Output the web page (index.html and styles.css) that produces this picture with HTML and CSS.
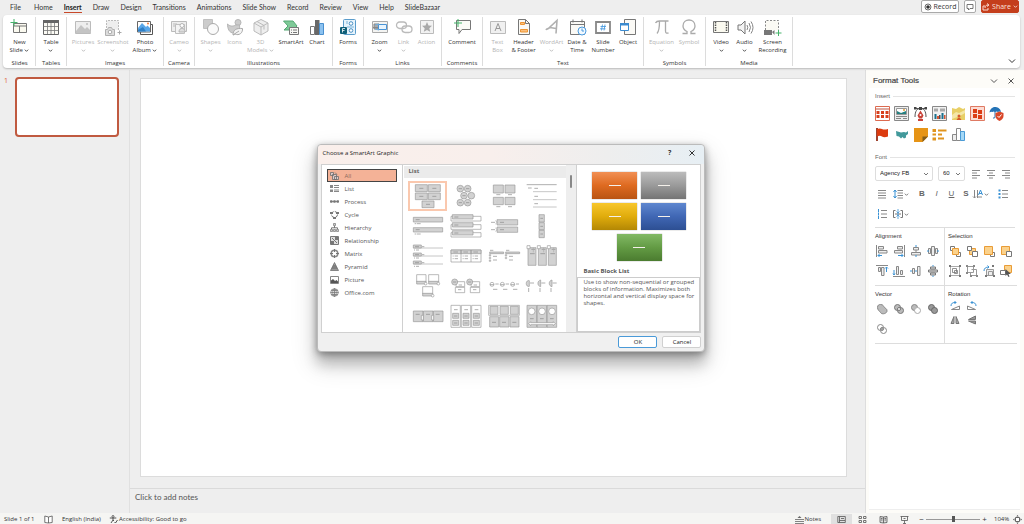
FILE: index.html
```html
<!DOCTYPE html>
<html lang="en">
<head>
<meta charset="utf-8">
<title>Presentation</title>
<link rel="stylesheet" href="styles.css">
</head>
<body>
<svg class="defs" aria-hidden="true">
  <symbol id="chev" viewBox="0 0 6 6"><path d="M1 2l2 2 2-2" fill="none" stroke="currentColor"/></symbol>
  <symbol id="bigchev" viewBox="0 0 8 8"><path d="M1 2.500l3 3 3-3" fill="none" stroke="currentColor"/></symbol>
  <symbol id="cross" viewBox="0 0 8 8"><path d="M1.500 1.500l5 5M6.500 1.500l-5 5" fill="none" stroke="currentColor"/></symbol>
</svg>

<header class="tabs">
  <nav class="tab-list">
    <a href="#">File</a><a href="#">Home</a><a href="#" class="active">Insert</a><a href="#">Draw</a><a href="#">Design</a><a href="#">Transitions</a><a href="#">Animations</a><a href="#">Slide Show</a><a href="#">Record</a><a href="#">Review</a><a href="#">View</a><a href="#">Help</a><a href="#">SlideBazaar</a>
  </nav>
  <div class="tab-actions">
    <button class="top-btn record"><svg viewBox="0 0 8 8"><circle cx="4" cy="4" r="3" fill="none" stroke="#444" stroke-width=".8"/><circle cx="4" cy="4" r="1.800" fill="#333"/></svg>Record</button>
    <button class="top-btn comment" aria-label="Comments"><svg viewBox="0 0 8 8"><path d="M1 1.500h6v4H4L2.500 7V5.500H1z" fill="none" stroke="#555" stroke-width=".8"/></svg></button>
    <button class="top-btn share"><svg viewBox="0 0 8 8"><path d="M3 3H1v4h5V5M3 5c0-2 1-3 3-3M5 .5L7 2 5 3.500" fill="none" stroke="#fbd9cf"/></svg>Share<svg class="c"><use href="#chev"/></svg></button>
  </div>
</header>

<section class="ribbon" aria-label="Insert ribbon">
  <div class="group g-slides"><div class="tools">
    <button><svg viewBox="0 0 18 18"><path d="M3.500 5.500h13v9h-13zM3.500 8h13M9.500 8v6.500" fill="#fbfaf0" stroke="#777"/><path d="M4 1v7M.5 4.500h7" stroke="#45b36b"/></svg><span>New<br>Slide <svg class="c"><use href="#chev"/></svg></span></button>
  </div><h2>Slides</h2></div>
  <div class="group g-tables"><div class="tools">
    <button><svg viewBox="0 0 18 18"><path d="M1.500 2.500h15v14h-15z" fill="#fbfaf4" stroke="#666"/><path d="M1 2h16v3H1z" fill="#666"/><path d="M1.500 8.500h15M1.500 12.500h15M5.500 5v11M9 5v11M12.500 5v11" stroke="#777" stroke-width=".8"/></svg><span>Table<br><svg class="c"><use href="#chev"/></svg></span></button>
  </div><h2>Tables</h2></div>
  <div class="group g-images"><div class="tools">
    <button disabled><svg viewBox="0 0 18 18"><path d="M1.500 3.500h15v12h-15z" fill="#eee" stroke="#bbb"/><path d="M2 13l5-6 4 4 2-2 4 4v2H2z" fill="#c4c4c4"/><circle cx="13" cy="6" r="1" fill="#bbb"/></svg><span>Pictures<br><svg class="c"><use href="#chev"/></svg></span></button>
    <button disabled><svg viewBox="0 0 18 18"><path d="M2.500 10V2.500h12V12" fill="#eee" stroke="#bbb" stroke-dasharray="2 1"/><path d="M1.500 11.500h2l1-2h3l1 2h2v6h-9z" fill="#ddd" stroke="#b0b0b0"/><circle cx="6" cy="14" r="1.800" fill="#fff" stroke="#aaa"/><path d="M15.500 12.500v4M13.500 14.500h4" stroke="#aaa"/></svg><span>Screenshot<br><svg class="c"><use href="#chev"/></svg></span></button>
    <button><svg viewBox="0 0 18 18"><path d="M4.500 14v2.500h12v-10H14" fill="none" stroke="#555"/><path d="M1.500 3.500h13v10.500h-13z" fill="#fff" stroke="#666"/><path d="M2 10l4-5 4 4 1.500-1.500L14 10v3.500H2z" fill="#58a6e8"/><path d="M2 12l5-3 3 4.500H2z" fill="#2f7fc6"/><circle cx="12" cy="5.500" r="1" fill="#ef7a3a"/></svg><span>Photo<br>Album <svg class="c"><use href="#chev"/></svg></span></button>
  </div><h2>Images</h2></div>
  <div class="group g-camera"><div class="tools">
    <button disabled><svg viewBox="0 0 18 18"><path d="M1.500 3.500h15v10h-15z" fill="#eee" stroke="#bbb"/><path d="M5.500 6.500h9v9h-9z" fill="#f4f4f4" stroke="#c0c0c0"/><circle cx="12" cy="7.500" r="2" fill="#fff" stroke="#b5b5b5"/><path d="M9 14c0-5 6-5 6 0z" fill="#ddd" stroke="#b5b5b5"/><path d="M3 6h4M3 8h3" stroke="#bbb"/></svg><span>Cameo<br><svg class="c"><use href="#chev"/></svg></span></button>
  </div><h2>Camera</h2></div>
  <div class="group g-illus"><div class="tools">
    <button disabled><svg viewBox="0 0 18 18"><path d="M1.500 1.500h9v9h-9z" fill="#ccc" stroke="#c0c0c0"/><circle cx="11" cy="11" r="5.500" fill="#fafafa" stroke="#aaa"/></svg><span>Shapes<br><svg class="c"><use href="#chev"/></svg></span></button>
    <button disabled><svg viewBox="0 0 18 18"><circle cx="12" cy="4.500" r="3" fill="#ccc" stroke="#b5b5b5"/><path d="M1.500 6c2 2 5 3 8 1h4c1 6-3 8-6 8-4 0-6-4-6-9z" fill="#ccc" stroke="#b5b5b5"/><path d="M7 17c0-5 3-7 9.500-6.500C17 15 13 18 9 16zM7 17l6-4" fill="#f3f3f3" stroke="#aaa"/></svg><span>Icons</span></button>
    <button disabled><svg viewBox="0 0 18 18"><path d="M9 1.500l7 3.500v8L9 17l-7-4V5z" fill="#eee" stroke="#bbb"/><path d="M2 5l7 4 7-4M9 9v8M5 3.500l7 4v4" fill="none" stroke="#bbb"/></svg><span>3D<br>Models <svg class="c"><use href="#chev"/></svg></span></button>
    <button><svg viewBox="0 0 18 18"><path d="M1.500 3h9.500l4 5-4 4H2l4-4z" fill="#7fca98" stroke="#55a873"/><path d="M7.500 9.500h9v7h-9z" fill="#f7f7f4" stroke="#777"/><path d="M9 12h1M11 12h4M9 14.500h1M11 14.500h4" stroke="#777"/></svg><span>SmartArt</span></button>
    <button><svg viewBox="0 0 18 18"><path d="M2.500 8.500h4v8h-4z" fill="#fff" stroke="#777"/><path d="M7 2h4.500v15H7z" fill="#686868"/><path d="M11.500 5.500h4v11h-4z" fill="#8cc2f0" stroke="#4a90cf"/></svg><span>Chart</span></button>
  </div><h2>Illustrations</h2></div>
  <div class="group g-forms"><div class="tools">
    <button><svg viewBox="0 0 18 18"><rect x="4.500" y="1.500" width="12" height="15" rx="1" fill="#e6f3fb" stroke="#5a9ccb"/><circle cx="12" cy="5.500" r="1.800" fill="#fff" stroke="#4a90c4"/><circle cx="12" cy="12.500" r="1.800" fill="#fff" stroke="#4a90c4"/><path d="M8 3v3M8 9h7" stroke="#7ab4dc"/><rect x="1" y="9" width="7" height="7" rx="1" fill="#0f5f78"/><path d="M3.500 14.500v-4h2.500M3.500 12.500h2" stroke="#fff" fill="none" stroke-width=".8"/></svg><span>Forms</span></button>
  </div><h2>Forms</h2></div>
  <div class="group g-links"><div class="tools">
    <button><svg viewBox="0 0 18 18"><path d="M1.500 3.500h15v11h-15z" fill="#f4f4f2" stroke="#aaa"/><path d="M3 6h5v5H3zM2 9.500h6" fill="#aaa" stroke="#888"/><path d="M7.500 6.500h8v5h-8z" fill="#e8f4fd" stroke="#4a94d6"/><path d="M4 7l4-1M4 11l4 1" stroke="#6faee0"/></svg><span>Zoom<br><svg class="c"><use href="#chev"/></svg></span></button>
    <button disabled><svg viewBox="0 0 18 18"><g fill="none" stroke="#bbb" stroke-width="1.300"><rect x="1.500" y="4" width="10" height="6.500" rx="3.200"/><rect x="7" y="8" width="10" height="6.500" rx="3.200"/></g></svg><span>Link<br><svg class="c"><use href="#chev"/></svg></span></button>
    <button disabled><svg viewBox="0 0 18 18"><path d="M2.500 2.500h13v13h-13z" fill="#f2f2f2" stroke="#bbb"/><path d="M9 4l1.500 3.500 3.500.3-2.700 2.400.9 3.600L9 12l-3.200 1.800.9-3.600L4 7.800l3.500-.3z" fill="#a8a8a8"/></svg><span>Action</span></button>
  </div><h2>Links</h2></div>
  <div class="group g-comments"><div class="tools">
    <button><svg viewBox="0 0 18 18"><path d="M3.500 2.500h14v9H9l-3 4v-4H3.500z" fill="#fbfaf6" stroke="#777"/><path d="M5 1v8M1 5h8" stroke="#45b36b"/></svg><span>Comment</span></button>
  </div><h2>Comments</h2></div>
  <div class="group g-text"><div class="tools">
    <button disabled><svg viewBox="0 0 18 18"><path d="M1.500 3.500h15v12h-15z" fill="#f0f0f0" stroke="#bbb"/><path d="M6 13l3-7.500L12 13M7 10.500h4" fill="none" stroke="#999"/></svg><span>Text<br>Box</span></button>
    <button><svg viewBox="0 0 18 18"><path d="M3.500 1.500h7l4 4v11h-11z" fill="#fbfaf6" stroke="#777"/><path d="M10.500 1.500v4h4" fill="none" stroke="#777"/><path d="M5.500 4.500h4v2h-4zM5.500 11.500h7v2.500h-7z" fill="#fbbf7d" stroke="#ee9533"/></svg><span>Header<br>&amp; Footer</span></button>
    <button disabled><svg viewBox="0 0 18 18"><path d="M3 12c1-2 2 0 4-3l7-6.500-1 13M7 9.500l6 1" fill="none" stroke="#b0b0b0" stroke-width="1.600"/></svg><span>WordArt<br><svg class="c"><use href="#chev"/></svg></span></button>
    <button><svg viewBox="0 0 18 18"><path d="M2.500 3.500h14v13h-14zM2.500 6.500h14M5 1.500v3M14 1.500v3" fill="#fbfaf6" stroke="#777"/><circle cx="14" cy="13" r="4" fill="#f2f9ff" stroke="#4a9ade"/><path d="M14 10.500V13h2" fill="none" stroke="#4a9ade"/></svg><span>Date &amp;<br>Time</span></button>
    <button><svg viewBox="0 0 18 18"><path d="M2 4h14v11H2z" fill="#fff" stroke="#888" stroke-width="1.800"/><path d="M8.500 6.500l-1 6M11 6.500l-1 6M6.500 8.500h5.500M6 10.800h5.500" stroke="#3f94dc" stroke-width=".8" fill="none"/></svg><span>Slide<br>Number</span></button>
    <button><svg viewBox="0 0 18 18"><path d="M5.500 1.500h11v15h-11z" fill="#fbfaf6" stroke="#777"/><path d="M1.500 5.500h8v7h-8z" fill="#fff" stroke="#3b8bd0"/><path d="M1 5h9v2.500H1z" fill="#3b8bd0"/></svg><span>Object</span></button>
  </div><h2>Text</h2></div>
  <div class="group g-symbols"><div class="tools">
    <button disabled><svg viewBox="0 0 18 18"><path d="M2.500 5c1-2 2-2 4-2h9M6.500 3c0 6 0 10-2.500 12.500M12.500 3v10c0 2 1 2.500 3 2" fill="none" stroke="#aaa" stroke-width="1.300"/></svg><span>Equation<br><svg class="c"><use href="#chev"/></svg></span></button>
    <button disabled><svg viewBox="0 0 18 18"><path d="M2.500 15.500h4.500v-2C4 12 3 10 3 8c0-4 3-6 6-6s6 2 6 6c0 2-1 4-4 5.500v2h4.500" fill="none" stroke="#aaa" stroke-width="1.300"/></svg><span>Symbol</span></button>
  </div><h2>Symbols</h2></div>
  <div class="group g-media"><div class="tools">
    <button><svg viewBox="0 0 18 18"><path d="M1.500 3.500h15v11h-15z" fill="#fbfaf0" stroke="#777"/><path d="M3.500 4v10M14.500 4v10" stroke="#555" stroke-width="1.500" stroke-dasharray="1.500 1"/></svg><span>Video<br><svg class="c"><use href="#chev"/></svg></span></button>
    <button><svg viewBox="0 0 18 18"><path d="M2 7h3l4-4v13l-4-4H2z" fill="#f4f4f4" stroke="#777"/><path d="M11 7q1.500 2.500 0 5M13 5q3 4.500 0 9M15 3.500q4 6 0 12" fill="none" stroke="#777" stroke-width=".9"/></svg><span>Audio<br><svg class="c"><use href="#chev"/></svg></span></button>
    <button><svg viewBox="0 0 18 18"><path d="M1.500 12V2.500h13V12" fill="#fbfaf4" stroke="#888" stroke-dasharray="2 1.500"/><path d="M0 12h8v5H0zM8 14l2.500-2v5z" fill="#777"/><path d="M14.500 12v6M11.500 15h6" stroke="#45b36b"/></svg><span>Screen<br>Recording</span></button>
  </div><h2>Media</h2></div>
  <button class="collapse" aria-label="Collapse ribbon"><svg><use href="#bigchev"/></svg></button>
</section>

<main class="workspace">
  <aside class="thumbs"><span class="num">1</span><button class="thumb" aria-label="Slide 1"></button></aside>
  <section class="editor">
    <div class="canvas"><div class="slide"></div></div>
    <div class="notes">Click to add notes</div>
  </section>
  <aside class="pane">
    <div class="pane-head"><h1>Format Tools</h1><button aria-label="Pane options"><svg><use href="#bigchev"/></svg></button><button aria-label="Close pane"><svg><use href="#cross"/></svg></button></div>
    <div class="pane-body">
      <h3 class="ruled">Insert</h3>
      <div class="insert-grid">
        <button aria-label="Table"><svg viewBox="0 0 15 15"><path d="M.5.500h14v14H.5z" fill="#fff" stroke="#dc6a50"/><path d="M1 2h13v2H1z" fill="#dfaaa0"/><path d="M1.500 5h3v3h-3zM6 5h3v3H6zM10.500 5h3v3h-3zM1.500 9h3v3h-3zM6 9h3v3H6zM10.500 9h3v3h-3z" fill="#d8401d"/></svg></button>
        <button aria-label="Picture layout"><svg viewBox="0 0 15 15"><path d="M.5.500h14v14H.5z" fill="#eee" stroke="#888"/><path d="M2.500 2.500h10v6h-10z" fill="#fff" stroke="#999"/><path d="M3 8V5l4 2 5-2v3z" fill="#268080"/><circle cx="10" cy="4" r="1" fill="#e59a31"/><path d="M2 10.500h11M2 12.500h5M9 12.500h4" stroke="#888"/></svg></button>
        <button aria-label="Vector pen"><svg viewBox="0 0 15 15"><path d="M2 11C2 5 4 2.500 7.500 2.500S13 5 13 11M2 2.500h11" fill="none" stroke="#555"/><path d="M1 1h2.500v2.500H1zM6 1h3v3H6zM11.500 1H14v2.500h-2.500z" fill="#444"/><path d="M7.500 4.500l3 5-1.500 3H6l-1.500-3zM5 13h5v2H5z" fill="#c84339"/><circle cx="7.500" cy="9" r="1" fill="#fff"/></svg></button>
        <button aria-label="Chart layout"><svg viewBox="0 0 15 15"><path d="M.5.500h14v14H.5z" fill="#f1f1f1" stroke="#888"/><path d="M2 2.500h4v3H2zM8 2.500h5v3H8z" fill="#aaa"/><path d="M2.500 8h2v5h-2zM9.500 7h2v6h-2z" fill="#1b718d"/><path d="M5 10h2v3H5zM12 9h1.500v4H12z" fill="#d65532"/><path d="M7 9h1.500v4H7z" fill="#48505c"/></svg></button>
        <button aria-label="Map region"><svg viewBox="0 0 15 15"><path d="M1 2l4 1 3-2 4 2 2-1v12H1z" fill="#e8cf66"/><path d="M1 9l4-3 3 1 6-3v3l-5 3-8 3z" fill="#f4e7a8"/><circle cx="8" cy="10" r="1.500" fill="#d65a2c"/><path d="M5.500 14q2.500-5 5 0z" fill="#d65a2c"/></svg></button>
        <button aria-label="Grid"><svg viewBox="0 0 15 15"><path d="M.5.500h14v14H.5z" fill="#fbdcd4" stroke="#df7a63"/><path d="M3 3h4v4H3zM8 4h4v4H8zM3 8h4v4H3zM8 9h4v4H8z" fill="#dc3c14"/></svg></button>
        <button aria-label="Umbrella"><svg viewBox="0 0 15 15"><path d="M.5 6.500C1 2.500 4 1 6 1s5.500 1 6 5q-2-1-3 0-1.500-1-3 0-1.500-1-2.500 0-1.500-.5-3 .5z" fill="#2473b6"/><path d="M6 5v6q0 1.500-2 1" fill="none" stroke="#2473b6"/><path d="M10.500 5.500l4 1.500v3q0 3-4 5-4-2-4-5V7z" fill="#d9482a"/><path d="M8.500 10l1.500 1.500 2.500-3" stroke="#fff" fill="none"/></svg></button>
        <button aria-label="Flag"><svg viewBox="0 0 15 15"><path d="M1 1h2v13H1z" fill="#9f4330"/><path d="M2 2q3-1 5 0t6 0v7.500q-4 1.500-6 0t-5 0z" fill="#dc3c10"/></svg></button>
        <button aria-label="Country map"><svg viewBox="0 0 15 15"><path d="M2 4l5 1.500L10 5l2 .5L14 4v3l-2 1.500v2L11 11l-1 .5L8.500 10 7 11.500 5 9.500 2.500 9z" fill="#42999b"/></svg></button>
        <button aria-label="Sticky note"><svg viewBox="0 0 15 15"><path d="M1 1h14v8.500L9.500 15H1z" fill="#e69416"/><path d="M9.500 15V9.500H15z" fill="#825c1a"/></svg></button>
        <button aria-label="Agenda"><svg viewBox="0 0 15 15"><path d="M6 3.500h8.500M6 7.500h4M6 11.500h6" stroke="#e0941e" stroke-width="1.800"/><path d="M.5 2h3.500v3H.5zM.5 6.500h3.500v2H.5zM.5 10.500h3.500v3H.5z" fill="#e0941e"/></svg></button>
        <button aria-label="Chart"><svg viewBox="0 0 15 15"><path d="M1.500 7.500h4v6h-4z" fill="#eee" stroke="#888"/><path d="M5.500 1.500h4v12h-4z" fill="#fff" stroke="#888"/><path d="M9.500 4.500h4v9h-4z" fill="#a5d8f6" stroke="#4a9bd6"/></svg></button>
      </div>
      <h3 class="ruled">Font</h3>
      <div class="font-row">
        <label class="pick face"><select aria-label="Font family"><option>Agency FB</option></select><svg><use href="#chev"/></svg></label>
        <label class="pick size"><select aria-label="Font size"><option>60</option></select><svg><use href="#chev"/></svg></label>
        <button class="first" aria-label="Align left"><svg viewBox="0 0 10 10"><path d="M1 1.500h8M1 4h5M1 6.500h8M1 9h5" stroke="#888"/></svg></button>
        <button aria-label="Align center"><svg viewBox="0 0 10 10"><path d="M1 1.500h8M3 4h4M1 6.500h8M3 9h4" stroke="#888"/></svg></button>
        <button aria-label="Align right"><svg viewBox="0 0 10 10"><path d="M1 1.500h8M4 4h5M1 6.500h8M4 9h5" stroke="#888"/></svg></button>
      </div>
      <div class="style-row">
        <button aria-label="Justify"><svg viewBox="0 0 10 10"><path d="M1 1.500h8M1 4h8M1 6.500h8M1 9h8" stroke="#888"/></svg></button>
        <button class="drop" aria-label="Line spacing"><svg viewBox="0 0 10 10"><path d="M4.500 1.500H10M4.500 4H10M4.500 6.500H10M4.500 9H10" stroke="#888"/><path d="M2 1v8M.5 3L2 1l1.500 2M.5 7L2 9l1.500-2" stroke="#3a92d4" fill="none"/></svg><svg class="c"><use href="#chev"/></svg></button>
        <button class="b">B</button><button class="i">I</button><button class="u">U</button><button class="s">S</button>
        <button class="drop" aria-label="Text direction"><svg viewBox="0 0 10 10"><path d="M1.500 1v8M4.500 1v8M0 7.500L1.500 9 3 7.500" stroke="#888" fill="none"/><path d="M5.500 6L7.500 1l2 5M6 4.500h3" stroke="#3a92d4" fill="none"/><path d="M5 8h4" stroke="#888"/></svg><svg class="c"><use href="#chev"/></svg></button>
        <button aria-label="Bullets"><svg viewBox="0 0 10 10"><path d="M4 1.500h6M4 5h6M4 8.500h6" stroke="#888"/><path d="M.5.500h2v2h-2zM.5 4h2v2h-2zM.5 7.500h2v2h-2z" fill="#3a92d4"/></svg></button>
        <button aria-label="Numbering"><svg viewBox="0 0 10 10"><path d="M4 1.500h6M4 5h6M4 8.500h6" stroke="#888"/><path d="M1.500 0v3M1.500 3.500v3M1.500 7v3" stroke="#3a92d4"/></svg></button>
        <button class="drop" aria-label="Vertical align"><svg viewBox="0 0 10 10"><path d="M2.500 1.500h-2v7h2M7.500 1.500h2v7h-2M2 5h6" stroke="#777" fill="none"/><path d="M5 0v10M3.500 2.500L5 4l1.500-1.500M3.500 7.500L5 6l1.500 1.500" stroke="#3a92d4" stroke-width=".8" fill="none"/></svg><svg class="c"><use href="#chev"/></svg></button>
      </div>
      <div class="quads">
        <section><h4>Alignment</h4><div class="icons">
          <button aria-label="Align left edges"><svg viewBox="0 0 12 12"><path d="M.5 0v12M2.500 1.500h5v2.500h-5zM2.500 5.500H11v2.500H2.500z" fill="#eee" stroke="#888"/><path d="M6 10.500H2M3.500 9L2 10.500 3.500 12" stroke="#3a92d4" fill="none"/></svg></button>
          <button aria-label="Align right edges"><svg viewBox="0 0 12 12"><path d="M11.500 0v12M4.500 1.500h5v2.500h-5zM1.500 5.500h8v2.500h-8z" fill="#eee" stroke="#888"/><path d="M5 10.500h5M8.500 9l1.500 1.500L8.500 12" stroke="#3a92d4" fill="none"/></svg></button>
          <button aria-label="Align centres"><svg viewBox="0 0 12 12"><path d="M3.500 2.500h5v2.500h-5zM1.500 7.500h9v2.500h-9zM6 5v2" fill="#eee" stroke="#888"/><path d="M6 0v2M6 10v2" stroke="#3a92d4"/></svg></button>
          <button aria-label="Distribute across"><svg viewBox="0 0 12 12"><path d="M4.500 1.500h3v9h-3zM1.500 3.500h2v5h-2zM8.500 3.500h2v5h-2z" fill="#eee" stroke="#888"/><path d="M0 6h2M10 6h2" stroke="#3a92d4"/></svg></button>
          <button aria-label="Align top edges"><svg viewBox="0 0 12 12"><path d="M0 .5h12M2.500 2.500h2v4h-2zM5.500 2.500h2.500v8H5.500z" fill="#eee" stroke="#888"/><path d="M10.500 7V2M9 3.500L10.500 2 12 3.500" stroke="#3a92d4" fill="none"/></svg></button>
          <button aria-label="Align bottom edges"><svg viewBox="0 0 12 12"><path d="M0 11.500h12M3.500 1.500h2v8h-2zM7.500 5.500h2v4h-2z" fill="#eee" stroke="#888"/><path d="M1 5v5M0 8.500L1 10l1-1.500" stroke="#3a92d4" fill="none"/></svg></button>
          <button aria-label="Align middle"><svg viewBox="0 0 12 12"><path d="M2.500 3.500h2v5h-2zM7.500 1.500h2.500v9H7.500z" fill="#eee" stroke="#888"/><path d="M0 6h2M5 6h2" stroke="#3a92d4"/></svg></button>
          <button aria-label="Distribute down"><svg viewBox="0 0 12 12"><path d="M3.500 2h5v2h-5zM1.500 5h9v2h-9zM3.500 8h5v2h-5z" fill="#ddd" stroke="#777"/><path d="M6 0v1.500M6 10.500v1.500" stroke="#3a92d4"/></svg></button>
        </div></section>
        <section><h4>Selection</h4><div class="icons">
          <button aria-label="Bring forward"><svg viewBox="0 0 12 12"><path d="M1.500 1.500h4v4h-4zM7.500 7.500h4v4h-4z" fill="#fff" stroke="#777"/><path d="M3.500 3.500h6v6h-6z" fill="#fbd28c" stroke="#e99c37"/></svg></button>
          <button aria-label="Send backward"><svg viewBox="0 0 12 12"><path d="M3.500 3.500h6v6h-6z" fill="#fbd28c" stroke="#e99c37"/><path d="M1.500 1.500h4v4h-4zM6.500 6.500h5v5h-5z" fill="#fff" stroke="#777"/></svg></button>
          <button aria-label="Bring to front"><svg viewBox="0 0 12 12"><path d="M7.500 7.500h4v4h-4z" fill="#fff" stroke="#777"/><path d="M1.500 1.500h8v8h-8z" fill="#fbd28c" stroke="#e99c37"/></svg></button>
          <button aria-label="Send to back"><svg viewBox="0 0 12 12"><path d="M1.500 1.500h8v8h-8z" fill="#fbd28c" stroke="#e99c37"/><path d="M6.500 6.500h5v5h-5z" fill="#fff" stroke="#777"/></svg></button>
          <button aria-label="Group"><svg viewBox="0 0 12 12"><path d="M1.500 1.500h9v9h-9z" fill="none" stroke="#aaa"/><path d="M3.500 3.500h4v4h-4zM5.500 5.500h3v3h-3z" fill="none" stroke="#777" stroke-width=".8"/><path d="M0 0h2v2H0zM10 0h2v2h-2zM0 10h2v2H0zM10 10h2v2h-2z" fill="#777"/></svg></button>
          <button aria-label="Ungroup"><svg viewBox="0 0 12 12"><path d="M1.500 1.500h6v6h-6zM5.500 4.500h5v6h-6v-3" fill="none" stroke="#999"/><path d="M0 0h2v2H0zM7 0h2v2H7zM0 7h2v2H0zM10 10h2v2h-2zM4 10h2v2H4z" fill="#888"/></svg></button>
          <button aria-label="Regroup"><svg viewBox="0 0 12 12"><path d="M3.500 4.500h7v6h-7zM5.500 6.500h4v4h-4z" fill="#eee" stroke="#999"/><path d="M1 6q0-4 5-4M4.500.5L6 2 4.500 3.500" fill="none" stroke="#3a92d4"/><path d="M9 0h2v2H9zM10 10h2v2h-2zM2 10h2v2H2z" fill="#777"/></svg></button>
          <button aria-label="Select"><svg viewBox="0 0 12 12"><path d="M4.500.5h7v7h-7z" fill="#fbd28c" stroke="#e99c37"/><path d="M.5 5.500h5v4h-5z" fill="#fff" stroke="#777"/><path d="M5.500 4v7l1.500-1.500L8.500 12l1-.5L8.500 9H11z" fill="#555"/></svg></button>
        </div></section>
        <section><h4>Vector</h4><div class="icons">
          <button aria-label="Union"><svg viewBox="0 0 12 12"><path d="M4.500 1.500c3 0 3 2 4 3s2.500 1 2.500 3.500-5 4-6.500 1.500C3.500 8 1.500 7 1.500 4.500S3 1.500 4.500 1.500z" fill="#bbb" stroke="#888"/></svg></button>
          <button aria-label="Combine"><svg viewBox="0 0 12 12"><g fill="#bbb" stroke="#777"><circle cx="4.500" cy="4.500" r="3"/><circle cx="7.500" cy="7.500" r="3"/><circle cx="6" cy="6" r="1.500" fill="#fff"/></g></svg></button>
          <button aria-label="Subtract"><svg viewBox="0 0 12 12"><circle cx="4.500" cy="4.500" r="3" fill="#bbb" stroke="#888"/><circle cx="7.500" cy="7.500" r="3" fill="#fff" stroke="#aaa"/></svg></button>
          <button aria-label="Fragment"><svg viewBox="0 0 12 12"><g fill="#999" stroke="#666"><circle cx="4.500" cy="4.500" r="3"/><circle cx="7.500" cy="7.500" r="3"/></g></svg></button>
          <button aria-label="Intersect"><svg viewBox="0 0 12 12"><g fill="#fff" stroke="#888"><circle cx="4.500" cy="4.500" r="3"/><circle cx="7.500" cy="7.500" r="3"/><circle cx="6" cy="6" r="1.500" fill="#aaa"/></g></svg></button>
        </div></section>
        <section><h4>Rotation</h4><div class="icons tight">
          <button aria-label="Rotate right"><svg viewBox="0 0 12 12"><path d="M2.500 9.500h8V6z" fill="#fff" stroke="#888"/><path d="M2 6q0-4 5-3.500M5.500 1L7 2.500 5.500 4" fill="none" stroke="#3a92d4"/></svg></button>
          <button aria-label="Rotate left"><svg viewBox="0 0 12 12"><path d="M1.500 9.500h8l-8-3.500z" fill="#fff" stroke="#888"/><path d="M10 6q0-4-5-3.500M6.500 1L5 2.500 6.500 4" fill="none" stroke="#3a92d4"/></svg></button>
          <button aria-label="Flip horizontal"><svg viewBox="0 0 12 12"><path d="M5 2.500v7H2zM7 2.500v7h3z" fill="#aaa" stroke="#777"/></svg></button>
          <button aria-label="Flip vertical"><svg viewBox="0 0 12 12"><path d="M9.500 5.500h-7l7-3.500zM9.500 7h-7l7 3z" fill="#999" stroke="#777"/></svg></button>
        </div></section>
      </div>
    </div>
  </aside>
</main>

<footer class="status">
  <span class="pages">Slide 1 of 1</span>
  <svg viewBox="0 0 9 9"><path d="M4.500 2v6M4.500 2L.8 1v6.500l3.700.5L8.200 7.500V1z" fill="#fff" stroke="#555" stroke-width=".8"/></svg>
  <span class="lang">English (India)</span>
  <svg viewBox="0 0 9 9"><circle cx="4" cy="1.500" r="1" fill="none" stroke="#444" stroke-width=".8"/><path d="M.8 3h6.500M4 3v2L2 8M4 5l1 1M5.500 7l1 1 2-3" fill="none" stroke="#444" stroke-width=".9"/></svg>
  <span>Accessibility: Good to go</span>
  <span class="fill"></span>
  <button class="notes-btn"><svg viewBox="0 0 9 9"><path d="M0 4.500h9M0 6.500h9M0 8.500h9" stroke="#666" stroke-width=".8"/><path d="M2.500 3l2-2 2 2z" fill="#666"/></svg>Notes</button>
  <button class="view on" aria-label="Normal view"><svg viewBox="0 0 9 9"><path d="M.8 1.500h7.500v6H.8zM2.500 1.500v6M2.500 5.500h5.500M4 3.500h3" fill="none" stroke="#555" stroke-width=".8"/></svg></button>
  <button class="view" aria-label="Slide sorter"><svg viewBox="0 0 9 9"><path d="M1 1.500h2.500v2H1zM5.500 1.500H8v2H5.500zM1 5.500h2.500v2H1zM5.500 5.500H8v2H5.500z" fill="none" stroke="#555" stroke-width=".8"/></svg></button>
  <button class="view" aria-label="Reading view"><svg viewBox="0 0 9 9"><path d="M4.500 2L1 1.500v6l3.500.5L8 7.500v-6zM4.500 2v6M2 3.500h1.500M2 5h1.500M5.500 3.500H7M5.500 5H7" fill="#ddd" stroke="#555" stroke-width=".8"/></svg></button>
  <button class="view" aria-label="Slide show"><svg viewBox="0 0 9 9"><path d="M.5 1.500h8M1.500 1.500v4h6v-4M4.500 5.500v3M3 8.500h3M3.500 3.500h2" fill="none" stroke="#555" stroke-width=".8"/></svg></button>
  <button class="step" aria-label="Zoom out">−</button>
  <input class="zoom" type="range" min="0" max="100" value="51" aria-label="Zoom">
  <button class="step" aria-label="Zoom in">+</button>
  <span class="pct">104%</span>
  <button class="fit" aria-label="Fit to window"><svg viewBox="0 0 9 9"><path d="M2.500 2.500h4v4h-4z" fill="#fff" stroke="#666"/><path d="M3.300 1.500L4.500 0l1.200 1.500zM3.300 7.500L4.500 9l1.200-1.500zM1.500 3.300L0 4.500l1.500 1.200zM7.500 3.300L9 4.500 7.500 5.700z" fill="#555"/></svg></button>
</footer>

<div class="dialog" role="dialog" aria-labelledby="dlg-title">
  <div class="dlg-head"><h2 id="dlg-title">Choose a SmartArt Graphic</h2><button aria-label="Help" class="help">?</button><button aria-label="Close"><svg><use href="#cross"/></svg></button></div>
  <div class="dlg-body">
    <nav class="cats">
      <button class="on"><svg viewBox="0 0 9 9"><path d="M.5 1.500h3v3h-3zM2.500 3.500h4v5h-4zM5 1.500l2 2M4.500 5.500h4v3h-4z" fill="#dcc" stroke="#6d6d6d" stroke-width=".8"/></svg>All</button>
      <button><svg viewBox="0 0 9 9"><path d="M0 1h3v3H0zM0 5.500h3V8H0z" fill="#888"/><path d="M4 1.500h5M4 3.500h5M4 6h5M4 7.500h5" stroke="#888"/></svg>List</button>
      <button><svg viewBox="0 0 9 9"><path d="M0 4.500h9" stroke="#888"/><path d="M.2 3.200h2.200v2.600H.2zM3.400 3.200h2.200v2.600H3.400zM6.600 3.200h2.200v2.600H6.600z" fill="#777"/></svg>Process</button>
      <button><svg viewBox="0 0 9 9"><circle cx="4.500" cy="4.500" r="3" fill="none" stroke="#777" stroke-dasharray="3.500 1.200"/><path d="M0 2h3v2H0zM6 2h3v2H6zM3 7h3v2H3z" fill="#777"/></svg>Cycle</button>
      <button><svg viewBox="0 0 9 9"><path d="M4.500 3v2M1.500 6V4.800h6V6" fill="none" stroke="#777"/><path d="M3.500.500h2v2h-2zM.5 6.500h2v2h-2zM3.500 6.500h2v2h-2zM6.500 6.500h2v2h-2z" fill="#ccc" stroke="#777" stroke-width=".7"/></svg>Hierarchy</button>
      <button><svg viewBox="0 0 9 9"><path d="M.5.500h8v8h-8z" fill="#ddd" stroke="#777"/><path d="M1 5h3v3H1zM5 1h3v3H5z" fill="#777"/><path d="M2 2l5 5" stroke="#777"/></svg>Relationship</button>
      <button><svg viewBox="0 0 9 9"><circle cx="4.500" cy="4.500" r="3.300" fill="#fff" stroke="#888" stroke-width="1.500"/><path d="M4.500 0v3M4.500 6v3M0 4.500h3M6 4.500h3" stroke="#777"/></svg>Matrix</button>
      <button><svg viewBox="0 0 9 9"><path d="M4.500.5l4 8h-8z" fill="#999" stroke="#666" stroke-width=".7"/><path d="M3 4h3M2 6h5" stroke="#666"/></svg>Pyramid</button>
      <button><svg viewBox="0 0 9 9"><path d="M.5 1.500h8v7h-8z" fill="#fff" stroke="#888"/><path d="M1 8V5.500L3 4l2 2 1.500-1L8 6.500V8z" fill="#555"/></svg>Picture</button>
      <button><svg viewBox="0 0 9 9"><g fill="none" stroke="#777" stroke-width=".8"><circle cx="4.500" cy="4.500" r="3.800"/><ellipse cx="4.500" cy="4.500" rx="1.800" ry="3.800"/><path d="M.5 4.500h8M1.300 2.500h6.400M1.300 6.500h6.400M4.500.5v8"/></g></svg>Office.com</button>
    </nav>
    <div class="gallery">
      <div class="gal-main"><h3>List</h3>
      <div class="gal-grid">
        <button class="on" aria-label="Basic Block List"><svg viewBox="32 71 96 78"><path class="g" d="M42 76h36v21H42zM81 76h36v21H81zM42 101h36v20H42zM81 101h36v20H81zM62 125h36v20H62z"/><path class="d" d="M54 87h12M93 87h12M54 111h12M93 111h12M74 135h12"/></svg></button>
        <button aria-label="Alternating Hexagons"><svg viewBox="148 71 96 78"><g class="g"><circle cx="179" cy="88" r="10"/><circle cx="201" cy="88" r="10"/><circle cx="190" cy="109" r="10"/><circle cx="212" cy="109" r="10"/><circle cx="179" cy="130" r="10"/><circle cx="201" cy="130" r="10"/></g><path class="d" d="M174 88h10M196 88h10M185 109h10M174 130h10M196 130h10"/></svg></button>
        <button aria-label="Picture Caption List"><svg viewBox="262 71 96 78"><path class="g" d="M278 77h30v24h-30zM313 77h30v24h-30zM278 114h30v22h-30zM313 114h30v22h-30z"/><path class="d" d="M287 106h12M322 106h12M287 142h12M322 142h12"/></svg></button>
        <button aria-label="Lined List"><svg viewBox="379 71 96 78"><path class="d" d="M381 76h90"/><path class="l" d="M400 97h71M400 121h71M400 143h71"/><path class="d" d="M385 86h11M404 87h11M404 111h11M404 133h11"/></svg></button>
        <button aria-label="Vertical Bullet List"><svg viewBox="32 161 96 78"><path class="g" d="M36 174h88v14H36zM36 205h88v13H36z"/><path class="d" d="M43 181h12M43 211h12M40 193h4M46 193h12M40 224h4M46 224h12"/></svg></button>
        <button aria-label="Vertical Box List"><svg viewBox="148 161 96 78"><path class="w" d="M151 171h90v14h-90zM151 196h90v14h-90zM151 220h90v13h-90z"/><path class="g" d="M155 166h62v13h-62zM155 190h62v13h-62zM155 214h62v13h-62z"/><path class="d" d="M161 173h12M161 197h12M161 221h12"/></svg></button>
        <button aria-label="Horizontal Bullet List"><svg viewBox="262 161 96 78"><path class="g" d="M289 181h62v16h-62zM289 203h62v16h-62z"/><path class="d" d="M271 189h12M271 211h12M298 189h12M298 211h12"/><path class="l" d="M284 184l6 5-6 5M284 206l6 5-6 5"/></svg></button>
        <button aria-label="Vertical Block List"><svg viewBox="379 161 96 78"><path class="g" d="M418 166h16v22h-16zM418 190h16v21h-16zM418 213h16v22h-16z"/><path class="d" d="M422 177h8M422 201h8M422 224h8"/></svg></button>
        <button aria-label="Tab List"><svg viewBox="32 251 96 78"><path class="l" d="M36 266h89M36 290h89M36 314h89"/><path class="g" d="M36 257h24v9H36zM36 281h24v9H36zM36 305h24v9H36z"/><path class="d" d="M41 262h12M62 262h7M38 272h3M44 272h9M41 286h12M62 286h7M38 296h3M44 296h9M41 310h12M62 310h7M38 321h3M44 321h9"/></svg></button>
        <button aria-label="Table List"><svg viewBox="148 251 96 78"><path class="w" d="M151 272h90v36h-90zM181 272v36M211 272v36"/><path class="g" d="M151 272h30v11h-30zM181 272h30v11h-30zM211 272h30v11h-30z"/><path class="d" d="M156 290h3M162 290h10M156 298h3M162 298h10M186 290h3M192 290h10M186 298h3M192 298h10M216 290h3M222 290h10M216 298h3M222 298h10M158 278h14M188 278h14M218 278h14"/></svg></button>
        <button aria-label="Square Accent List"><svg viewBox="262 251 96 78"><path class="g" d="M267 278h42v5h-42zM315 278h42v5h-42z"/><path class="w" d="M266 286h4v4h-4zM266 294h4v4h-4zM266 302h4v4h-4zM314 286h4v4h-4zM314 294h4v4h-4z"/><path class="d" d="M268 273h10M316 273h10M277 291h12M277 302h12M325 291h12M325 302h12"/></svg></button>
        <button aria-label="Picture Accent List"><svg viewBox="379 251 96 78"><path class="g" d="M385 265h24v53h-24zM416 265h24v53h-24zM446 265h24v53h-24z"/><path class="w" d="M382 259h9v9h-9zM413 259h9v9h-9zM443 259h9v9h-9z"/><path class="d" d="M395 270h11M426 270h11M456 270h11M391 283h14M422 283h14M452 283h14"/><path class="l" d="M401 265v14M432 265v14M462 265v14"/></svg></button>
        <button aria-label="Bending Picture"><svg viewBox="32 341 96 78"><path class="w" d="M46 346h28v22H46zM82 346h30v22H82zM64 382h30v22H64z"/><path class="g" d="M46 366h28v8H46zM82 366h30v8H82zM64 402h30v8H64z"/><g class="w"><circle cx="73" cy="373" r="4"/><circle cx="111" cy="373" r="4"/><circle cx="94" cy="409" r="4"/></g></svg></button>
        <button aria-label="Stacked List"><svg viewBox="148 341 96 78"><path class="w" d="M166 367h26v15h-26zM164 384h28v16h-28zM211 367h26v15h-26zM209 384h28v16h-28z"/><g class="g"><circle cx="162" cy="368" r="9"/><circle cx="207" cy="368" r="9"/></g><path class="d" d="M157 368h10M202 368h10M174 377h10M172 391h10M219 377h10M217 391h10"/></svg></button>
        <button aria-label="Pie Process"><svg viewBox="262 341 96 78"><g class="w"><circle cx="274" cy="375" r="6"/><circle cx="305" cy="375" r="6"/><circle cx="336" cy="375" r="6"/></g><path class="d" d="M268 376h12M299 376h12M330 376h12M284 374h10M315 374h10M346 374h9M277 390h13M307 390h13M337 390h13"/></svg></button>
        <button aria-label="Half Circle List"><svg viewBox="379 341 96 78"><path class="g" d="M389 364a7 9 0 1 0 0 17zM423 362c-11 2-11 18 0 20zM457 362c-11 2-11 18 0 20z"/><path class="d" d="M391 371h12M425 371h12M459 371h12M387 386v12M421 386v12M454 386v12"/></svg></button>
        <button aria-label="Detailed Process"><svg viewBox="32 429 96 78"><path class="g" d="M36 453h29v32H36zM66 453h29v32H66zM96 453h29v32H96z"/><path class="w" d="M60 466h6v14h-6zM91 466h6v14h-6z"/><path class="d" d="M43 463h12M74 463h12M103 463h12"/></svg></button>
        <button aria-label="Grouped List"><svg viewBox="148 429 96 78"><path class="w" d="M151 436h28v66h-28zM182 436h28v66h-28zM213 436h28v66h-28z"/><path class="g" d="M156 460h18v15h-18zM187 460h18v15h-18zM218 460h18v15h-18zM156 481h18v15h-18zM187 481h18v15h-18zM218 481h18v15h-18z"/><path class="d" d="M160 449h11M191 449h11M222 449h11M160 468h10M191 468h10M222 468h10M160 489h10M191 489h10M222 489h10"/></svg></button>
        <button aria-label="Horizontal Picture List"><svg viewBox="262 429 96 78"><path class="w" d="M264 436h92v30h-92z"/><path class="g" d="M268 439h24v24h-24zM298 439h25v24h-25zM329 439h24v24h-24zM267 470h27v31h-27zM297 470h28v31h-28zM328 470h27v31h-27z"/><path class="d" d="M274 487h12M304 487h12M335 487h12"/></svg></button>
        <button aria-label="Continuous Picture List"><svg viewBox="379 429 96 78"><path class="g" d="M382 436h29v66h-29zM412 436h29v66h-29zM442 436h29v66h-29z"/><g class="w"><circle cx="396" cy="454" r="10"/><circle cx="427" cy="454" r="10"/><circle cx="457" cy="454" r="10"/><path d="M387 491l6-6v3h68v-3l6 6-6 6v-3h-68v3z"/></g><path class="d" d="M391 476h11M421 476h11M451 476h11"/></svg></button>
      </div></div>
      <div class="gal-scroll"><i></i></div>
    </div>
    <div class="detail">
      <div class="tiles"><span class="t orange"></span><span class="t gray"></span><span class="t gold"></span><span class="t blue"></span><span class="t green"></span></div>
      <h3>Basic Block List</h3>
      <p>Use to show non-sequential or grouped blocks of information. Maximizes both horizontal and vertical display space for shapes.</p>
    </div>
  </div>
  <div class="dlg-foot"><button class="ok">OK</button><button>Cancel</button></div>
</div>
</body>
</html>
```
FILE: styles.css
```css
* { box-sizing: border-box; }
body {
  margin: 0;
  min-height: 100vh;
  display: flex;
  flex-direction: column;
  background: #eee;
  color: #333;
  font: 6px/8px "Open Sans", sans-serif;
}
h1, h2, h3, h4, p { margin: 0; font-weight: 400; font-size: 6px; }
button {
  margin: 0; padding: 0; border: 0; background: none;
  font: inherit; color: inherit;
}
a { color: inherit; text-decoration: none; }
svg { display: block; overflow: visible; flex: none; }
.defs { position: absolute; width: 0; height: 0; }
.c { display: inline-block; width: 5px; height: 5px; vertical-align: middle; }

/* tabs */
.tabs { display: flex; justify-content: space-between; height: 15px; padding: 0 5px 0 10px; }
.tab-list { display: flex; gap: 11px; font: 7px/14px Lato, sans-serif; }
.tab-list a { white-space: nowrap; }
.tab-list a:first-child { margin-right: 2px; }
.tab-list .active { font-weight: 700; color: #222; height: 13px; border-bottom: 1px solid #c8492a; }
.tab-actions { display: flex; gap: 5px; align-items: flex-start; }
.top-btn {
  display: flex; align-items: center; justify-content: center; gap: 2px;
  height: 13px; background: #fff; border: 1px solid #aaa; border-radius: 2px;
  font: 7px/11px "Open Sans", sans-serif;
}
.top-btn svg { width: 8px; height: 8px; }
.top-btn .c { width: 5px; height: 5px; }
.record { width: 38px; }
.comment { width: 12px; }
.share { width: 38px; background: #c43e1c; border-color: #c43e1c; color: #fbe3dc; }

/* ribbon */
.ribbon {
  display: flex; position: relative;
  height: 53px; margin: 0 4px 0 3px; padding: 2px 0 0 1px;
  background: #fff; border-radius: 4px;
  box-shadow: 0 1px 2px rgba(0, 0, 0, .22);
}
.group {
  display: flex; flex-direction: column; justify-content: space-between;
  height: 49px; border-right: 1px solid #dcdcdc;
}
.group h2 { text-align: center; height: 7px; }
.tools { display: grid; justify-content: center; padding-top: 1px; }
.tools button { display: flex; flex-direction: column; align-items: center; gap: 2px; }
.tools button > svg { width: 18px; height: 18px; }
.tools span { white-space: nowrap; }
.tools button:disabled { color: #b4b4b4; }
.g-slides { width: 32px; }
.g-tables, .g-camera, .g-forms { width: 31px; }
.g-images { width: 97px; }
.g-images .tools { grid-template-columns: 28px 32px 32px; }
.g-illus { width: 138px; }
.g-illus .tools { grid-template-columns: 25px 23px 29px 32px 20px; padding-right: 2px; }
.g-links { width: 78px; }
.g-links .tools { grid-template-columns: 30px 18px 28px; }
.g-comments { width: 41px; }
.g-text { width: 161px; }
.g-text .tools { grid-template-columns: 27px 25px 31px 20px 32px 18px; padding-right: 5px; }
.g-symbols { width: 62px; }
.g-symbols .tools { grid-template-columns: 29px 26px; }
.g-media { width: 87px; }
.g-media .tools { grid-template-columns: 25px 22px 34px; }
.collapse { margin: auto 4px 3px auto; }
.collapse svg { width: 8px; height: 8px; }

/* workspace */
.workspace { flex: 1; display: flex; padding-top: 2px; }
.thumbs { display: flex; align-items: flex-start; width: 130px; padding: 7px 0 0 4px; gap: 7px; border-right: 1px solid #e0e0e0; }
.num { color: #e0603c; font-size: 7px; }
.thumb { width: 104px; height: 60px; background: #fff; border: 2px solid #c05a40; border-radius: 4px; }
.editor { flex: 1; display: flex; flex-direction: column; }
.canvas { flex: 1; display: flex; padding: 8px 18px 11px 10px; }
.slide { flex: 1; background: #fff; border: 1px solid #dcdcdc; }
.notes { height: 25px; padding: 3px 5px; border-top: 1px solid #dadada; font: 8px/10px Lato, sans-serif; color: #555; }

/* format pane */
.pane {
  width: 159px; padding: 4px 4px 3px 3px; border-left: 1px solid #ddd;
  display: flex; flex-direction: column;
  background: #fdfcf8; font-family: "Liberation Sans", sans-serif;
}
.pane-head { display: flex; align-items: center; height: 14px; padding: 0 5px 0 4px; gap: 9px; color: #555; }
.pane-head h1 { flex: 1; font-size: 8px; -webkit-text-stroke: .2px; color: #444; }
.pane-head svg { width: 8px; height: 8px; }
.pane-body { flex: 1; padding: 4px 5px 0 6px; background: #fff; border-bottom: 1px solid #eee; }
.ruled { display: flex; align-items: center; gap: 3px; color: #666; }
.ruled::after { content: ""; flex: 1; border-top: 1px solid #e4e4e4; }
.insert-grid { display: grid; grid-template-columns: repeat(7, 19px); row-gap: 6px; padding: 6px 0 11px; }
.insert-grid svg { width: 15px; height: 15px; }
.font-row { display: flex; align-items: center; gap: 5px; padding-top: 5px; }
.font-row button svg, .style-row button > svg:first-child { width: 10px; height: 10px; }
.first { margin-left: 1px; }
.pick { position: relative; display: flex; align-items: center; }
.pick select {
  appearance: none; width: 100%; height: 15px; padding: 0 4px; margin: 0;
  border: 1px solid #ddd; border-radius: 2px; background: #fff;
  font: 6px/13px "Liberation Sans", sans-serif; color: #222;
}
.pick svg { position: absolute; right: 4px; width: 6px; height: 6px; color: #777; }
.face { width: 58px; }
.size { width: 27px; }
.style-row { display: grid; grid-template-columns: 16px 22px 14px 15px 15px 14px 25px 16px; align-items: center; row-gap: 10px; padding: 8px 0 8px 2px; }
.style-row button { display: flex; align-items: center; gap: 1px; height: 10px; color: #666; }
.style-row .b, .style-row .i, .style-row .u, .style-row .s { justify-content: center; font-size: 8px; }
.b { font-weight: 700; }
.i { font-style: italic; }
.u { text-decoration: underline; }
.s { font-weight: 700; }
.quads { display: grid; grid-template-columns: 1fr 1fr; border-top: 1px solid #ddd; }
.quads section { height: 58px; padding: 4px 0 0; border-bottom: 1px solid #ddd; }
.quads section:nth-child(odd) { border-right: 1px solid #ddd; }
.quads section:nth-child(even) { padding-left: 3px; }
.icons { display: grid; grid-template-columns: repeat(4, 17px); row-gap: 8px; padding: 5px 0 0 1px; }
.icons button { height: 12px; }
.icons svg { width: 12px; height: 12px; }
.tight { grid-template-columns: repeat(2, 17px); row-gap: 2px; padding-top: 2px; }

/* status bar */
.status { display: flex; align-items: center; height: 11px; padding: 1px 2px 0 4px; background: #f5f5f3; color: #333; white-space: nowrap; }
.status svg { width: 9px; height: 9px; }
.pages { width: 40px; }
.lang { width: 47px; margin-left: 9px; }
.lang + svg { margin-right: 1px; }
.fill { flex: 1; }
.notes-btn { display: flex; align-items: center; gap: 1px; margin-right: 10px; }
.view { display: flex; justify-content: center; align-items: center; width: 21px; height: 10px; }
.view.on { background: #e0e0e0; }
.view + .step { margin-left: 2px; }
.step { width: 9px; font-size: 8px; text-align: center; }
.zoom { appearance: none; width: 54px; height: 7px; margin: 0; background: linear-gradient(#999, #999) center / 100% 1px no-repeat; }
.zoom::-webkit-slider-thumb { appearance: none; width: 3px; height: 6px; background: #555; }
.pct { width: 24px; padding-left: 5px; }

/* dialog */
.dialog {
  position: absolute; top: 144px; left: 31%; width: 388px;
  padding: 0 3px 3px; background: #f0f0f0; border: 1px solid #bbb; border-radius: 4px;
  box-shadow: 0 2px 7px rgba(0, 0, 0, .35), 0 12px 14px rgba(0, 0, 0, .22), 0 11px 24px 4px rgba(0, 0, 0, .12);
}
.dlg-head {
  display: flex; align-items: center; height: 19px; margin: 0 -3px; padding: 0 8px 4px 4px;
  background: linear-gradient(90deg, #faefeb, #f8efec 45%, #eee 75%, #e7eff4); border-radius: 4px 4px 0 0;
}
.dlg-head h2 { flex: 1; color: #222; }
.dlg-head svg { width: 8px; height: 8px; }
.help { margin-right: 17px; font-weight: 700; font-size: 7px; }
.dlg-body { display: grid; grid-template-columns: 81px 1fr 124px; height: 169px; border: 1px solid #d0d0d0; }
.cats { padding: 4px 5px; background: #fff; border-right: 1px solid #d0d0d0; color: #555; }
.cats button { display: flex; align-items: center; gap: 5px; width: 70px; height: 13px; padding: 0 2px; border: 1px solid transparent; }
.cats .on { background: #f4b297; border-color: #444; color: #8c6a5c; }
.cats svg { width: 9px; height: 9px; }
.gallery { display: flex; background: #fff; }
.gal-main { flex: 1; padding: 1px 0 0 1px; }
.gal-main h3 { height: 12px; padding: 1px 4px; background: #ebebeb; font-weight: 700; color: #666; }
.gal-grid { display: grid; grid-template-columns: repeat(4, 1fr); grid-auto-rows: 30px; padding: 3px 5px 0 4px; }
.gal-grid button { display: flex; align-items: center; justify-content: center; }
.gal-grid .on { border: 2px solid #fac8ae; }
.gal-grid svg { width: 32px; height: 26px; }
.g { fill: #d2d2d2; stroke: #999; stroke-width: 2; }
.w { fill: #fff; stroke: #999; stroke-width: 2; }
.l { fill: none; stroke: #aaa; stroke-width: 2; }
.d { fill: none; stroke: #888; stroke-width: 2; }
.gal-scroll { width: 10px; padding: 10px 4px; background: #eee; }
.gal-scroll i { display: block; width: 2px; height: 13px; background: #888; border-radius: 1px; }
.detail { display: flex; flex-direction: column; background: #fff; border-left: 1px solid #d0d0d0; }
.tiles { display: flex; flex-wrap: wrap; justify-content: center; gap: 4px; padding: 7px 12px 5px 13px; }
.t { display: flex; align-items: center; justify-content: center; width: 45px; height: 27px; box-shadow: 0 0 1px #888; }
.t::after { content: ""; width: 12px; height: 1px; background: #f4f0ea; }
.orange { background: linear-gradient(#f19055, #de6a20 50%, #b95413); }
.gray { background: linear-gradient(#bcbcbc, #9a9a9a 50%, #747474); }
.gold { background: linear-gradient(#f8c72d, #e0ac0c 50%, #b38704); }
.blue { background: linear-gradient(#5f87cf, #4067b4 50%, #2d4f93); }
.green { background: linear-gradient(#82b965, #639b44 50%, #4b7c30); }
.detail h3 { padding: 0 6px; font-weight: 700; color: #555; line-height: 11px; }
.detail p { flex: 1; margin: 0; padding: 1px 4px 1px 5px; border: 1px solid #ccc; line-height: 7px; color: #555; }
.dlg-foot { display: flex; justify-content: flex-end; gap: 5px; padding-top: 3px; }
.dlg-foot button { width: 39px; height: 12px; background: #fff; border: 1px solid #d0d0d0; border-radius: 2px; color: #222; }
.dlg-foot .ok { border-color: #4a9ad8; }
```
